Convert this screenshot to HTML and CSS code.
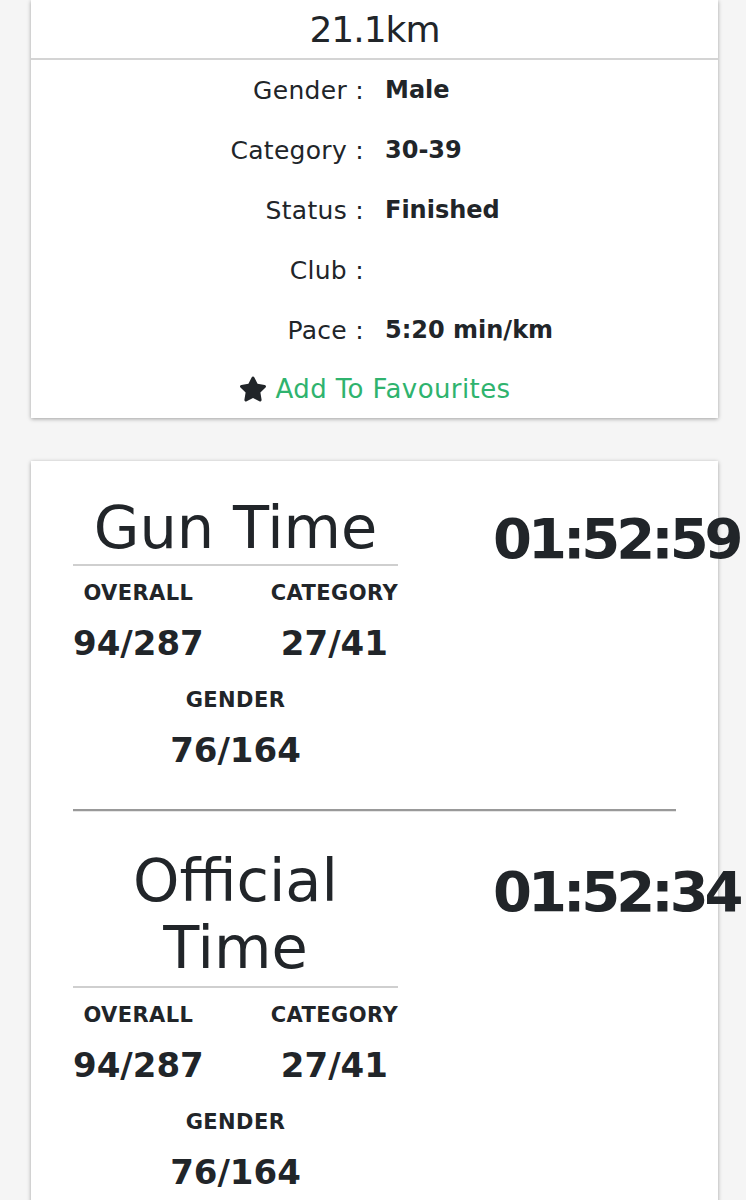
FILE: index.html
```html
<!DOCTYPE html>
<html>
<head>
<meta charset="utf-8">
<link rel="stylesheet" href="styles.css">
</head>
<body>
<div class="card info-card">
  <div class="distance">21.1km</div>
  <div class="info-grid">
    <div class="label">Gender :</div><div class="value">Male</div>
    <div class="label">Category :</div><div class="value">30-39</div>
    <div class="label">Status :</div><div class="value">Finished</div>
    <div class="label">Club :</div><div class="value"></div>
    <div class="label">Pace :</div><div class="value">5:20 min/km</div>
  </div>
  <div class="fav">
    <svg class="star" viewBox="0 0 576 512"><path d="M259.3 17.8L194 150.2 47.9 171.5c-26.2 3.8-36.7 36.1-17.7 54.6l105.7 103-25 145.5c-4.5 26.3 23.2 46 46.4 33.7L288 439.6l130.7 68.7c23.2 12.2 50.9-7.4 46.4-33.7l-25-145.5 105.7-103c19-18.5 8.5-50.8-17.7-54.6L382 150.2 316.7 17.8c-11.7-23.6-45.6-23.9-57.4 0z"/></svg>
    <span class="fav-text">Add To Favourites</span>
  </div>
</div>

<div class="card time-card">
  <div class="time-section first">
    <div class="time-left">
      <div class="time-title">Gun Time</div>
      <div class="stats">
        <div class="stat"><div class="stat-label">OVERALL</div><div class="stat-value">94/287</div></div>
        <div class="stat"><div class="stat-label">CATEGORY</div><div class="stat-value">27/41</div></div>
        <div class="stat wide"><div class="stat-label">GENDER</div><div class="stat-value">76/164</div></div>
      </div>
    </div>
    <div class="time-right">01:52:59</div>
  </div>
  <hr class="divider">
  <div class="time-section second">
    <div class="time-left">
      <div class="time-title two-line">Official Time</div>
      <div class="stats">
        <div class="stat"><div class="stat-label">OVERALL</div><div class="stat-value">94/287</div></div>
        <div class="stat"><div class="stat-label">CATEGORY</div><div class="stat-value">27/41</div></div>
        <div class="stat wide"><div class="stat-label">GENDER</div><div class="stat-value">76/164</div></div>
      </div>
    </div>
    <div class="time-right">01:52:34</div>
  </div>
</div>
</body>
</html>
```

FILE: styles.css
```css
html, body {
  margin: 0;
  padding: 0;
}
body {
  background: #f5f5f5;
  font-family: "DejaVu Sans", "Open Sans", sans-serif;
  color: #212529;
  overflow-x: hidden;
}
.card {
  background: #fff;
  margin: 0 28px 0 31px;
  box-shadow: 0 1px 4px rgba(0, 0, 0, 0.35);
}
.distance {
  height: 58px;
  line-height: 60px;
  text-align: center;
  font-size: 36px;
  letter-spacing: -1px;
  border-bottom: 2px solid #d4d4d4;
}
.info-grid {
  display: grid;
  grid-template-columns: 333px 1fr;
  column-gap: 21px;
  grid-auto-rows: 60px;
  align-items: center;
}
.label {
  text-align: right;
  font-size: 25px;
  font-weight: normal;
  letter-spacing: 0.3px;
}
.value {
  font-size: 24px;
  font-weight: bold;
}
.fav {
  height: 58px;
  display: flex;
  align-items: center;
  justify-content: center;
  gap: 9px;
}
.star {
  width: 28px;
  height: 26px;
  fill: #212529;
}
.fav-text {
  color: #2fb36e;
  font-size: 26px;
  letter-spacing: 0.4px;
}
.time-card {
  margin-top: 43px;
  padding: 33px 42px 40px;
  min-height: 760px;
}
.time-section {
  display: grid;
  grid-template-columns: 325px 1fr;
  column-gap: 95px;
}
.time-section.first {
  padding-bottom: 24px;
}
.time-section.second {
  padding-top: 35px;
}
.time-title {
  font-size: 59px;
  line-height: 67px;
  text-align: center;
  padding-bottom: 3px;
  border-bottom: 2px solid #cfcfcf;
}
.time-title.two-line {
  padding-bottom: 5px;
}
.time-right {
  font-size: 56px;
  font-weight: bold;
  letter-spacing: -4px;
  line-height: 70px;
  margin-top: 10px;
  white-space: nowrap;
}
.stats {
  display: grid;
  grid-template-columns: auto auto;
  justify-content: space-between;
  margin-top: 12px;
  row-gap: 7px;
}
.stat {
  text-align: center;
}
.stat.wide {
  grid-column: 1 / 3;
}
.stat-label {
  font-size: 21px;
  font-weight: bold;
  line-height: 30px;
  letter-spacing: 0.4px;
}
.stat-value {
  font-size: 34px;
  font-weight: bold;
  line-height: 70px;
}
.divider {
  margin: 0;
  border: 0;
  border-top: 2px solid #999;
  border-bottom: 1px solid #e6e6e6;
}
```
